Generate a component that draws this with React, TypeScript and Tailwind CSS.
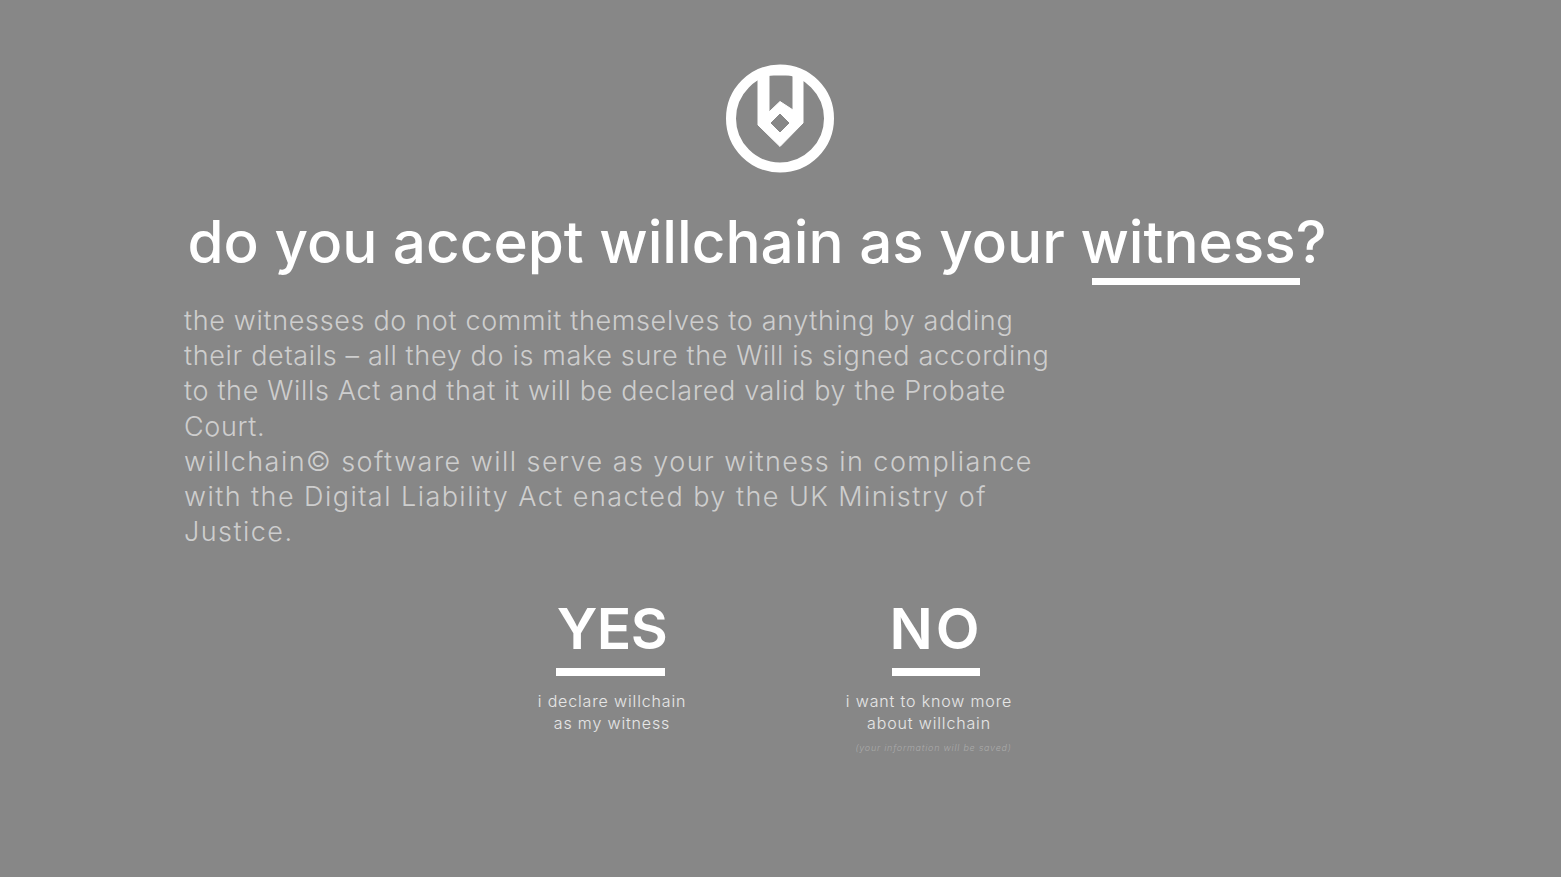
const font = "[font-family:Inter,'Liberation_Sans',sans-serif]"

function Logo() {
  return (
    <svg width="120" height="120" viewBox="0 0 120 120" className="block mr-[2px]">
      <circle cx="60" cy="58.5" r="49" fill="none" stroke="#fff" strokeWidth="10" />
      <path
        fillRule="evenodd"
        fill="#fff"
        stroke="#fff"
        strokeWidth="1"
        strokeLinejoin="round"
        d="M38 11H83V63L60 86.5L38 65ZM49 15V52L60 41.5L73 50V15ZM60 53L50 63L60 73L70 63Z"
      />
    </svg>
  )
}

function Choice(props: {
  label: string
  labelClass: string
  barClass: string
  lines: string[]
  note?: string
  boxClass: string
}) {
  return (
    <button className={`flex flex-col items-center text-white ${props.boxClass}`}>
      <span className={`text-[57px] leading-[68px] font-semibold ${props.labelClass}`}>{props.label}</span>
      <span className={`mt-[5px] h-[8px] bg-white ${props.barClass}`} />
      <span className="mt-[14px] text-[16px] leading-[22px] font-light tracking-[0.85px] text-white/80 text-center">
        {props.lines.map((line) => (
          <span key={line} className="block">{line}</span>
        ))}
      </span>
      {props.note && (
        <span className="mt-[8px] ml-[9px] text-[9px] leading-[12px] italic font-light tracking-[0.75px] text-white/30">
          {props.note}
        </span>
      )}
    </button>
  )
}

export default function App() {
  return (
    <div className={`min-h-screen bg-[#878787] flex flex-col ${font}`}>
      <div className="flex justify-center pt-[60px]">
        <Logo />
      </div>

      <h1 className="mt-[24px] pr-[47px] text-center text-[58.4px] leading-[76px] font-medium text-white">
        do you accept willchain as your{' '}
        <span className="relative inline-block">
          witness
          <span className="absolute left-[12px] top-[74px] h-[7px] w-[208px] bg-white" />
        </span>
        ?
      </h1>

      <div className="mt-[23px] ml-[184px] w-[870px] text-[27px] leading-[35.2px] font-light text-white/60">
        <p className="tracking-[0.66px]">
          the witnesses do not commit themselves to anything by adding their details – all they do is make sure the Will
          is signed according to the Wills Act and that it will be declared valid by the Probate Court.
        </p>
        <p className="tracking-[1.45px]">
          willchain© software will serve as your witness in compliance with the Digital Liability Act enacted by the UK
          Ministry of Justice.
        </p>
      </div>

      <div className="mt-[46px] flex items-start pl-[537px]">
        <Choice
          label="YES"
          labelClass="tracking-[-0.5px]"
          barClass="w-[109px] mr-[3px]"
          lines={['i declare willchain', 'as my witness']}
          boxClass="w-[150px]"
        />
        <Choice
          label="NO"
          labelClass="tracking-[3px] ml-[14px]"
          barClass="w-[88px] ml-[14px]"
          lines={['i want to know more', 'about willchain']}
          note="(your information will be saved)"
          boxClass="ml-[157px] w-[170px]"
        />
      </div>
    </div>
  )
}
